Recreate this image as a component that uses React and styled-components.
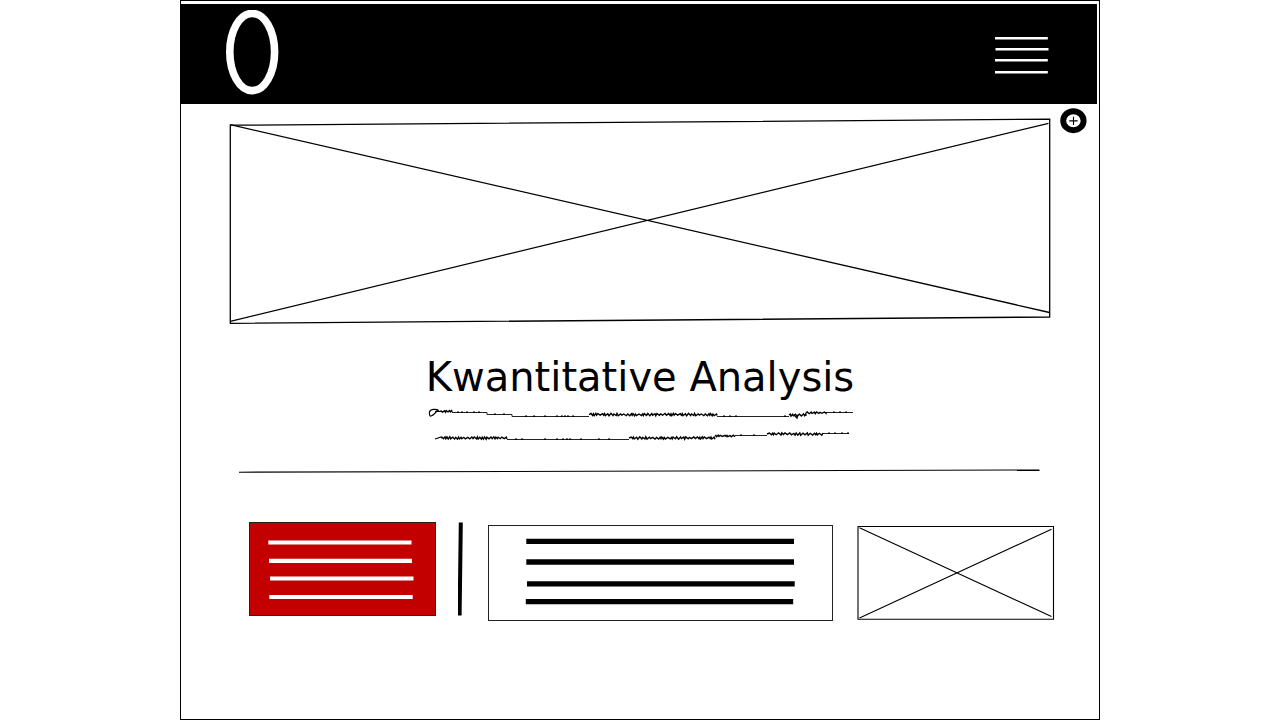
import React from "react";
import styled, { createGlobalStyle } from "styled-components";

const GlobalStyle = createGlobalStyle`
  * { box-sizing: border-box; }
  body {
    margin: 0;
    background: #fff;
    color: #000;
    font-family: "DejaVu Sans", Verdana, sans-serif;
  }
`;

const Frame = styled.div`
  max-width: 920px;
  min-height: 100vh;
  margin: 0 auto;
  padding-top: 3px;
  border: 1px solid #000;
`;

const Header = styled.header`
  display: flex;
  align-items: center;
  justify-content: space-between;
  height: 100px;
  margin-right: 2px;
  padding: 0 48px 0 44px;
  background: #000;
`;

const HomeLink = styled.a`
  display: block;
  height: 88px;
`;

const IconButton = styled.button`
  flex: none;
  display: block;
  padding: 0;
  border: 0;
  background: transparent;
  cursor: pointer;
`;

const Drawing = styled.svg`
  display: block;
  width: ${(p) => (p.$fluid ? "100%" : "auto")};
  min-width: 0;
  fill: none;
  stroke: ${(p) => p.$ink || "#000"};
`;

const Hero = styled.section`
  display: flex;
  align-items: flex-start;
  gap: 9px;
  padding: 3px 12px 0 48px;
`;

const Intro = styled.section`
  display: flex;
  flex-direction: column;
  align-items: center;
  gap: 3px;
  padding: 26px 0 0;
`;

const Title = styled.h1`
  margin: 0;
  font-size: 40px;
  font-weight: 400;
  line-height: 48px;
  text-align: center;
`;

const Rule = styled.div`
  padding: 20px 59px 0 58px;
`;

const Cards = styled.section`
  display: grid;
  grid-template-columns: 187fr 8px 345fr 200fr;
  align-items: start;
  gap: 22px;
  padding: 48px 44px 0 68px;
`;

const Card = styled.article`
  height: ${(p) => (p.$accent ? 94 : 96)}px;
  margin-top: ${(p) => (p.$accent ? 0 : 3)}px;
  border: 1px solid #222;
  background: ${(p) => (p.$accent ? "#c30000" : "#fff")};
`;

// Builds a hand-scribbled stroke between x1 and x2 around the height y.
function scribble(x1, x2, y, amp, seed) {
  let d = `M${x1} ${y}`;
  let x = x1;
  let up = true;
  let n = seed;
  while (x < x2) {
    n = (n * 37 + 11) % 101;
    const step = 0.8 + (n % 5) * 0.4;
    const height = amp * (0.5 + (n % 7) / 12);
    x = Math.min(x2, x + step);
    d += `L${x.toFixed(1)} ${(y + (up ? -height : height)).toFixed(1)}`;
    up = !up;
  }
  return d;
}

const scribbles = [
  [13, 25, 7.4, 0.9, 3],
  [162, 290, 10.6, 1.2, 7],
  [362, 379, 11, 1.4, 12],
  [379, 399, 8.8, 0.9, 9],
  [14, 80, 34, 1.2, 5],
  [202, 288, 34, 1.2, 14],
  [288, 308, 32, 0.8, 2],
  [340, 396, 30, 1.2, 8],
];

const dots = [
  [30, 8], [34, 8], [39, 8], [46, 8], [51, 8], [67, 10], [76, 10],
  [98, 12], [106, 12], [117, 12], [129, 12], [134, 12], [137, 12], [140, 12],
  [145, 12], [296, 12], [302, 12], [308, 12], [357, 12], [406, 8], [412, 8],
  [418, 8], [88, 35], [94, 35], [117, 35], [129, 35], [135, 35], [139, 35],
  [142, 35], [153, 35], [171, 35], [181, 35], [313, 31], [326, 31], [401, 29],
  [407, 29], [414, 29], [420, 29],
];

function Handwriting() {
  return (
    <Drawing width="426" height="40" viewBox="0 0 426 40" aria-hidden="true">
      <path
        strokeWidth="1.2"
        d="M12 6.5C9 4.5 3 5 2.5 8c-.4 3.5.5 4.5 2 3.8 3-1 5-4.3 6.5-6.3M8 7.5h5"
      />
      <path
        strokeWidth="1"
        stroke="#222"
        d="M25 8.500H60V10.500H85V12.500H162M290 12.500H362M399 8.500H426M80 35.500H202M308 31.500H340M396 29.500H422"
      />
      <path strokeWidth="1.3" d="M8 35l6-2M367 11l3 3 1-3" />
      {scribbles.map(([a, b, y, amp, seed]) => (
        <path key={`${a}-${y}`} strokeWidth="1.4" d={scribble(a, b, y, amp, seed)} />
      ))}
      {dots.map(([x, y]) => (
        <path key={`${x}-${y}`} strokeWidth="1.5" d={`M${x} ${y + 0.3}h2`} />
      ))}
    </Drawing>
  );
}

export default function App() {
  return (
    <>
      <GlobalStyle />
      <Frame>
        <Header>
          <HomeLink href="#" aria-label="Home">
            <Drawing width="56" height="88" viewBox="0 0 56 88" $ink="#fff">
              <ellipse cx="27.2" cy="42" rx="22.4" ry="38.6" strokeWidth="7.6" />
            </Drawing>
          </HomeLink>
          <IconButton type="button" aria-label="Menu">
            <Drawing width="56" height="40" viewBox="0 0 56 40" $ink="#fff">
              <path
                strokeWidth="2.4"
                d="M2 4.3H54.8M2.5 15.2H55.5M2 26.3H54.8M2 38.3H54.8"
              />
            </Drawing>
          </IconButton>
        </Header>
        <main>
          <Hero>
            <Drawing $fluid viewBox="0 0 822 220" role="img" aria-label="Image placeholder">
              <path strokeWidth="1.3" d="M1.3 18.2L820.7 12.2V210L1.3 216.4Z" />
              <path strokeWidth="1.3" d="M1.3 17.7L820.5 205.5M1.3 214.4L819.5 16.300" />
            </Drawing>
            <IconButton type="button" aria-label="Add">
              <Drawing width="27" height="27" viewBox="0 0 27 27">
                <ellipse cx="13.4" cy="13.7" rx="10.2" ry="9.5" strokeWidth="5.9" />
                <path strokeWidth="1.1" d="M9.3 13.9h8.4M13.5 9.8v8.2" />
              </Drawing>
            </IconButton>
          </Hero>
          <Intro>
            <Title>Kwantitative Analysis</Title>
            <Handwriting />
          </Intro>
          <Rule>
            <Drawing $fluid viewBox="0 0 801 10" aria-hidden="true">
              <path strokeWidth="1.1" d="M0 8.2L800.5 6" />
            </Drawing>
          </Rule>
          <Cards>
            <Card $accent>
              <Drawing $fluid viewBox="0 0 185 92" $ink="#fff" aria-hidden="true">
                <path
                  strokeWidth="4.2"
                  d="M18.3 19.5H161.5M19 37.8H162M20 55.5H163.5M19.3 74H162.7"
                />
              </Drawing>
            </Card>
            <Drawing width="8" height="94" viewBox="0 0 8 94" aria-hidden="true">
              <path strokeWidth="4" d="M2.8 0.5L1.6 93.5" />
            </Drawing>
            <Card>
              <Drawing $fluid viewBox="0 0 343 94" aria-hidden="true">
                <path
                  strokeWidth="5.4"
                  d="M37.3 15.4H305M37.3 36H305M38 57.9H305.7M36.8 75.6H304.2"
                />
              </Drawing>
            </Card>
            <Drawing $fluid viewBox="0 0 200 100" role="img" aria-label="Image placeholder">
              <path strokeWidth="1.1" d="M3 4.5H198.5V97.3H3Z" />
              <path strokeWidth="1.1" d="M4.5 5.8L196.5 94.5M4.5 96L196.5 7.2" />
            </Drawing>
          </Cards>
        </main>
      </Frame>
    </>
  );
}
